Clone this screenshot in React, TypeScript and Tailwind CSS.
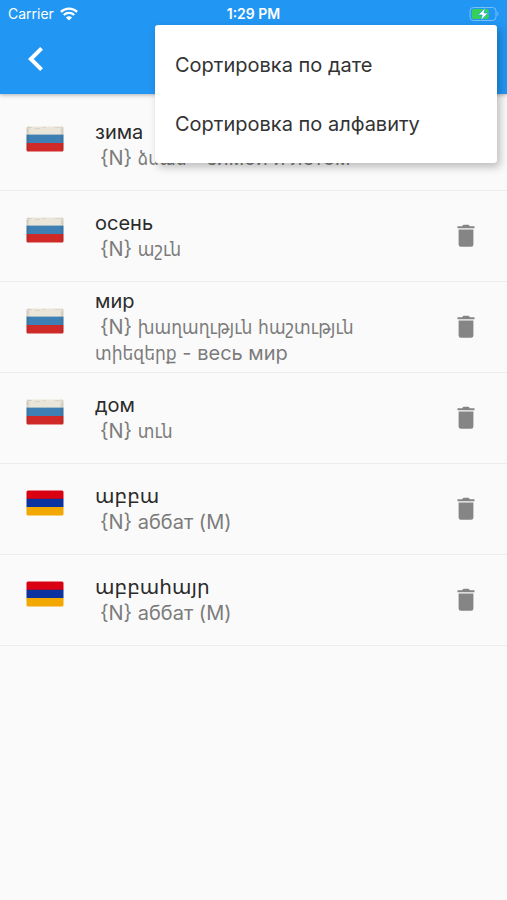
import React, { useState } from 'react';

// ---------------------------------------------------------------------------
// Types
// ---------------------------------------------------------------------------

type Lang = 'ru' | 'hy';

interface Entry {
  id: number;
  lang: Lang;
  word: string;
  translation: string;
}

// ---------------------------------------------------------------------------
// Data
// ---------------------------------------------------------------------------

const ENTRIES: Entry[] = [
  { id: 1, lang: 'ru', word: 'зима', translation: '{N} ձման - зимой и летом' },
  { id: 2, lang: 'ru', word: 'осень', translation: '{N} աշւն' },
  { id: 3, lang: 'ru', word: 'мир', translation: '{N} խաղաղւթյւն հաշտւթյւն տիեզերք - весь мир' },
  { id: 4, lang: 'ru', word: 'дом', translation: '{N} տւն' },
  { id: 5, lang: 'hy', word: 'աբբա', translation: '{N} аббат (M)' },
  { id: 6, lang: 'hy', word: 'աբբահայր', translation: '{N} аббат (M)' },
];

const SORT_OPTIONS = ['Сортировка по дате', 'Сортировка по алфавиту'];

// ---------------------------------------------------------------------------
// Icons
// ---------------------------------------------------------------------------

const WifiIcon: React.FC = () => (
  <svg width="18" height="14" viewBox="0 0 18 14" fill="none" stroke="#fff" strokeWidth="2.3" aria-hidden="true">
    <path d="M0.9 4.9a11.5 11.5 0 0 1 16.2 0" />
    <path d="M3.8 8a7.4 7.4 0 0 1 10.4 0" />
    <path d="M9 13.6 5.9 10.5a4.4 4.4 0 0 1 6.2 0Z" fill="#fff" stroke="none" />
  </svg>
);

const BatteryIcon: React.FC = () => (
  <svg width="30" height="14" viewBox="0 0 30 14" aria-hidden="true">
    <rect x="1" y="0.5" width="26" height="13" rx="3.5" fill="none" stroke="#79bff9" />
    <path d="M28.4 4.8c1.3.4 1.3 4 0 4.4Z" fill="#79bff9" />
    <rect x="2.8" y="2" width="17" height="10" rx="2" fill="#35d058" />
    <path d="M16.4.8 9 8h4.2l-1.4 5.4L19.2 6H15Z" fill="#fff" stroke="#2196f3" strokeWidth="0.7" />
  </svg>
);

const BackIcon: React.FC = () => (
  <svg width="16" height="26" viewBox="0 0 16 26" fill="none" stroke="#fff" strokeWidth="4" aria-hidden="true">
    <path d="M13.6 2.4 2.8 13l10.8 10.6" />
  </svg>
);

const TrashIcon: React.FC = () => (
  <svg width="18" height="24" viewBox="0 0 18 24" fill="#858585" aria-hidden="true">
    <path d="M0.5 2.2h4.7C5.8 1.2 6.4.8 7.4.8h3.2c1 0 1.6.4 2.2 1.4h4.7v2H.5Z" />
    <path d="M1.6 5.6h14.8v14.9a2.3 2.3 0 0 1-2.3 2.3H3.9a2.3 2.3 0 0 1-2.3-2.3Z" />
  </svg>
);

const RussianFlag: React.FC = () => (
  <svg width="38" height="26" viewBox="0 0 38 26" role="img" aria-label="ru">
    <defs>
      <clipPath id="ru-clip">
        <rect x="0.5" y="0.5" width="37" height="25" rx="1.5" />
      </clipPath>
      <linearGradient id="ru-shade" x1="0" x2="1">
        <stop offset="0" stopColor="#000" stopOpacity="0.12" />
        <stop offset="0.12" stopColor="#000" stopOpacity="0" />
        <stop offset="0.88" stopColor="#000" stopOpacity="0" />
        <stop offset="1" stopColor="#000" stopOpacity="0.12" />
      </linearGradient>
    </defs>
    <g clipPath="url(#ru-clip)">
      <rect width="38" height="9" fill="#e9e5d8" />
      <rect y="8.6" width="38" height="8.4" fill="#3f80b4" />
      <rect y="17" width="38" height="9" fill="#d02a28" />
      <path d="M2 1.5h4M9 2.5h5M17 1.5h3M29 1.5h5M1.5 3v3M36 4v3" stroke="#d9d4c6" />
      <rect width="38" height="26" fill="url(#ru-shade)" />
    </g>
  </svg>
);

const ArmenianFlag: React.FC = () => (
  <svg width="38" height="26" viewBox="0 0 38 26" role="img" aria-label="hy">
    <defs>
      <clipPath id="hy-clip">
        <rect x="0.5" y="0.5" width="37" height="25" rx="1.5" />
      </clipPath>
    </defs>
    <g clipPath="url(#hy-clip)">
      <rect width="38" height="9" fill="#d90012" />
      <rect y="8.8" width="38" height="8.4" fill="#0a33a0" />
      <rect y="17" width="38" height="9" fill="#f2a800" />
    </g>
  </svg>
);

// ---------------------------------------------------------------------------
// Parts
// ---------------------------------------------------------------------------

const StatusBar: React.FC = () => (
  <div className="grid grid-cols-3 items-center px-2 pt-1 text-[14px] leading-5 text-white">
    <div className="flex items-center gap-1.5">
      <span>Carrier</span>
      <WifiIcon />
    </div>
    <span className="text-center font-semibold">1:29 PM</span>
    <div className="flex justify-end">
      <BatteryIcon />
    </div>
  </div>
);

// Armenian words get the condensed face inside a translation, the rest stays in Inter
const Translation: React.FC<{ text: string }> = ({ text }) => (
  <p className="max-w-[290px] indent-[5px] text-[#7c7c7c]">
    {text.split(/([\u0530-\u058f]+)/).map((part, i) =>
      i % 2 === 1 ? (
        <span key={i} className="font-['DejaVu_Sans_Condensed','DejaVu_Sans',sans-serif] text-[19px] leading-none">
          {part}
        </span>
      ) : (
        part
      ),
    )}
  </p>
);

const EntryRow: React.FC<{ entry: Entry; onDelete: (id: number) => void }> = ({ entry, onDelete }) => (
  <li className="flex min-h-[91px] items-center border-b border-[#ededed] pr-8 pl-[26px]">
    <div className="shrink-0 pb-3">{entry.lang === 'ru' ? <RussianFlag /> : <ArmenianFlag />}</div>
    <div className="ml-[31px] min-w-0 flex-1 text-[20px] leading-[26px]">
      <h2 className="text-[#2b2b2b]">{entry.word}</h2>
      <Translation text={entry.translation} />
    </div>
    <button type="button" aria-label={`Удалить ${entry.word}`} onClick={() => onDelete(entry.id)}>
      <TrashIcon />
    </button>
  </li>
);

// ---------------------------------------------------------------------------
// Page
// ---------------------------------------------------------------------------

const App: React.FC = () => {
  const [entries, setEntries] = useState<Entry[]>(ENTRIES);
  const [menuOpen, setMenuOpen] = useState(true);

  const sortBy = (option: string) => {
    setEntries((prev) =>
      [...prev].sort((a, b) =>
        option === SORT_OPTIONS[0] ? a.id - b.id : a.word.localeCompare(b.word),
      ),
    );
    setMenuOpen(false);
  };

  return (
    <div className="relative min-h-screen bg-[#fafafa] font-[Inter,'Noto_Sans','DejaVu_Sans',sans-serif]">
      <header className="relative bg-[#2196f3] shadow-[0_1px_4px_rgba(0,0,0,0.3)]">
        <StatusBar />
        <div className="flex h-[70px] items-center pl-7">
          <button type="button" aria-label="Назад">
            <BackIcon />
          </button>
        </div>
      </header>

      {menuOpen && (
        <div
          role="menu"
          className="absolute top-[25px] right-[10px] z-10 w-[342px] rounded-[3px] bg-white py-2.5 shadow-[3px_4px_9px_rgba(0,0,0,0.25)]"
        >
          {SORT_OPTIONS.map((option) => (
            <button
              key={option}
              type="button"
              role="menuitem"
              onClick={() => sortBy(option)}
              className="block h-[59px] w-full px-5 text-left text-[20px] text-[#333]"
            >
              {option}
            </button>
          ))}
        </div>
      )}

      <ul className="pt-1.5">
        {entries.map((entry) => (
          <EntryRow
            key={entry.id}
            entry={entry}
            onDelete={(id) => setEntries((prev) => prev.filter((e) => e.id !== id))}
          />
        ))}
      </ul>
    </div>
  );
};

export default App;
